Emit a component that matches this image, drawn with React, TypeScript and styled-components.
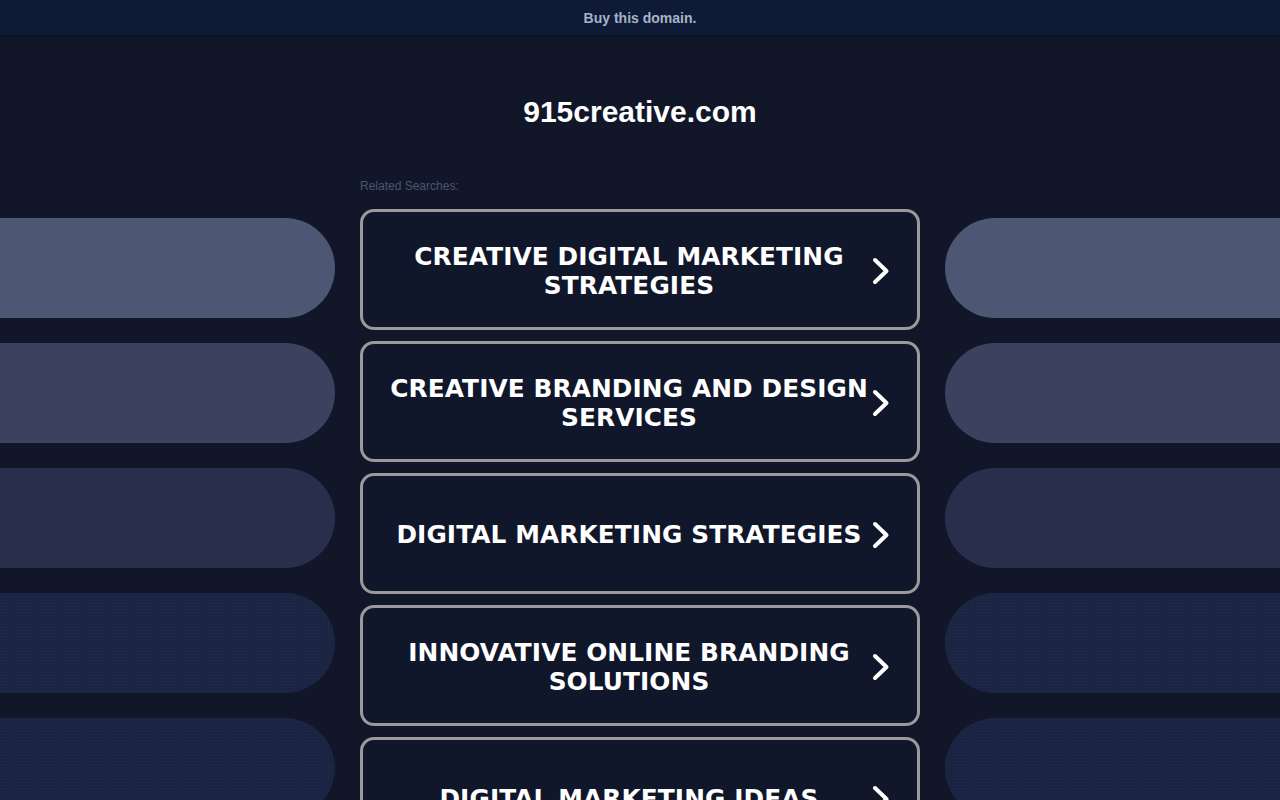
import React from "react";
import styled, { createGlobalStyle } from "styled-components";

const GlobalStyle = createGlobalStyle`
  html, body {
    margin: 0;
    padding: 0;
    background: #111729;
    overflow: hidden;
  }
  body {
    font-family: "Liberation Sans", Arial, sans-serif;
  }
`;

const Page = styled.div`
  width: 1280px;
  height: 800px;
  overflow: hidden;
  background: #111729;
`;

const TopBar = styled.div`
  height: 35px;
  background: #0f1b36;
  display: flex;
  align-items: center;
  justify-content: center;
  box-shadow: 0 1px 3px rgba(0, 0, 0, 0.25);
`;

const BuyLink = styled.a`
  color: #a7b3c6;
  font-size: 14px;
  font-weight: bold;
  text-decoration: none;
`;

const Body = styled.div`
  display: grid;
  grid-template-columns: 335px 560px 335px;
  column-gap: 25px;
`;

const Side = styled.div<{ $right?: boolean }>`
  display: flex;
  flex-direction: column;
  gap: 25px;
  padding-top: 183px;
  align-items: ${({ $right }) => ($right ? "flex-end" : "flex-start")};
`;

const Pill = styled.div<{ $tone: string; $dots?: boolean; $right?: boolean }>`
  width: 335px;
  height: 100px;
  flex-shrink: 0;
  background-color: ${({ $tone }) => $tone};
  background-image: ${({ $dots }) =>
    $dots
      ? "radial-gradient(rgba(70, 90, 140, 0.16) 0.6px, transparent 0.8px)"
      : "none"};
  background-size: 3px 3px;
  border-radius: ${({ $right }) => ($right ? "50px 0 0 50px" : "0 50px 50px 0")};
`;

const Center = styled.div`
  display: flex;
  flex-direction: column;
`;

const Title = styled.h1`
  margin: 0;
  padding-top: 58px;
  height: 38px;
  line-height: 38px;
  text-align: center;
  color: #ffffff;
  font-size: 30px;
  font-weight: bold;
`;

const Related = styled.div`
  margin-top: 47px;
  height: 16px;
  line-height: 16px;
  font-size: 12px;
  color: #4b5573;
`;

const List = styled.div`
  margin-top: 15px;
  display: flex;
  flex-direction: column;
  gap: 11px;
`;

const Card = styled.a`
  box-sizing: border-box;
  height: 121px;
  border: 3px solid #9a9a9a;
  border-radius: 14px;
  background: #11172b;
  display: flex;
  align-items: center;
  padding: 2px 23px 0 26px;
  text-decoration: none;
  flex-shrink: 0;
`;

const CardText = styled.span`
  flex: 1;
  text-align: center;
  color: #ffffff;
  font-family: "DejaVu Sans", Verdana, sans-serif;
  font-weight: bold;
  font-size: 24.8px;
  line-height: 29px;
  letter-spacing: 0.1px;
`;

const Chevron = () => (
  <svg width="25" height="30" viewBox="0 0 25 30" fill="none">
    <path
      d="M6 4 L17.5 15 L6 26"
      stroke="#ffffff"
      strokeWidth="4"
      strokeLinecap="round"
      strokeLinejoin="round"
    />
  </svg>
);

const searches = [
  "CREATIVE DIGITAL MARKETING STRATEGIES",
  "CREATIVE BRANDING AND DESIGN SERVICES",
  "DIGITAL MARKETING STRATEGIES",
  "INNOVATIVE ONLINE BRANDING SOLUTIONS",
  "DIGITAL MARKETING IDEAS",
];

const tones = [
  { c: "#4d5672", d: false },
  { c: "#3a4260", d: false },
  { c: "#272f4d", d: false },
  { c: "#1b2443", d: true },
  { c: "#1a2342", d: true },
];

export default function App() {
  return (
    <Page>
      <GlobalStyle />
      <TopBar>
        <BuyLink href="#">Buy this domain.</BuyLink>
      </TopBar>
      <Body>
        <Side>
          {tones.map((t, i) => (
            <Pill key={i} $tone={t.c} $dots={t.d} />
          ))}
        </Side>
        <Center>
          <Title>915creative.com</Title>
          <Related>Related Searches:</Related>
          <List>
            {searches.map((s) => (
              <Card href="#" key={s}>
                <CardText>{s}</CardText>
                <Chevron />
              </Card>
            ))}
          </List>
        </Center>
        <Side $right>
          {tones.map((t, i) => (
            <Pill key={i} $tone={t.c} $dots={t.d} $right />
          ))}
        </Side>
      </Body>
    </Page>
  );
}
